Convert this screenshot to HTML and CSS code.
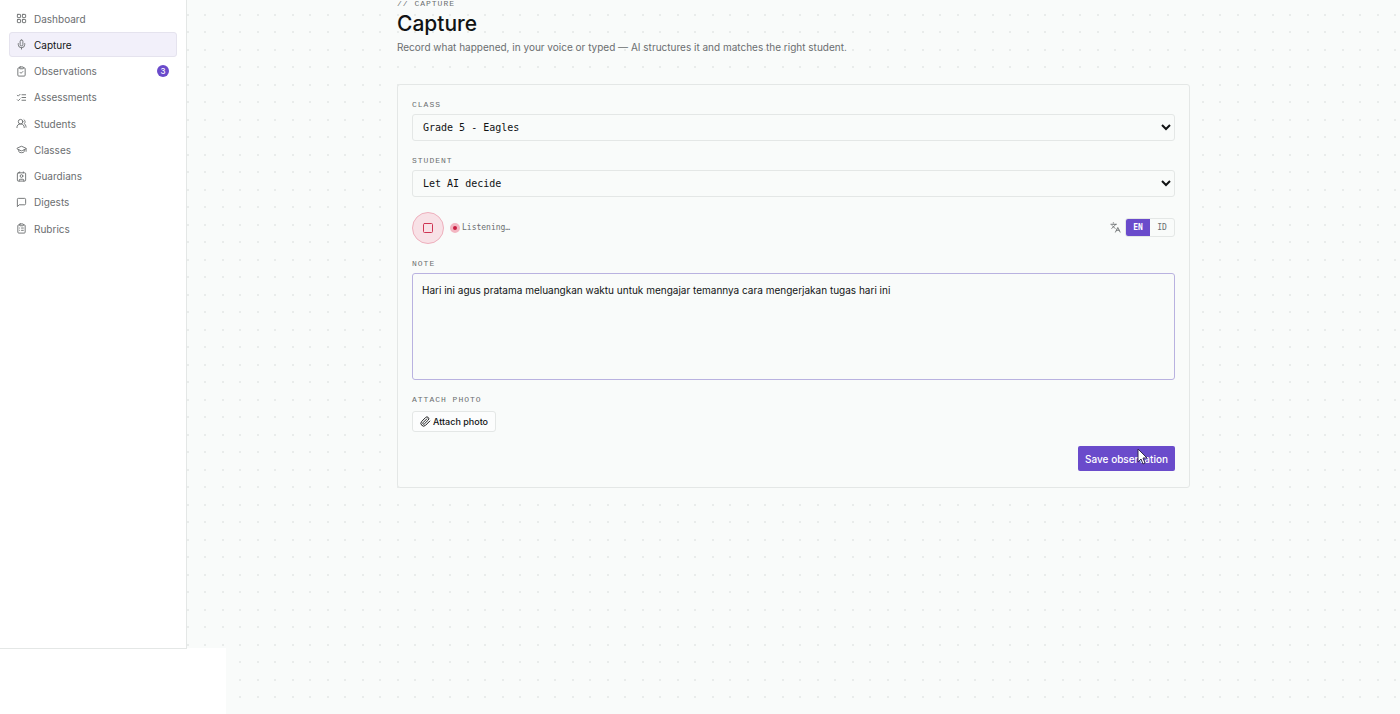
FILE: index.html
```html
<!DOCTYPE html>
<html lang="en">
<head>
    <meta charset="UTF-8">
    <meta name="viewport" content="width=device-width, initial-scale=1.0">
    <title>Capture</title>
    <link rel="stylesheet" href="styles.css">
</head>
<body>
    <div class="layout">
        <aside class="sidebar">
            <nav class="nav">
                <a href="#" class="nav-item">
                    <svg class="icon" viewBox="0 0 24 24"><rect x="3" y="3" width="7" height="7" rx="1"/><rect x="14" y="3" width="7" height="7" rx="1"/><rect x="14" y="14" width="7" height="7" rx="1"/><rect x="3" y="14" width="7" height="7" rx="1"/></svg>
                    Dashboard
                </a>
                <a href="#" class="nav-item active">
                    <svg class="icon" viewBox="0 0 24 24"><path d="M12 19v3"/><path d="M19 10v2a7 7 0 0 1-14 0v-2"/><rect x="9" y="2" width="6" height="13" rx="3"/></svg>
                    Capture
                </a>
                <a href="#" class="nav-item">
                    <svg class="icon" viewBox="0 0 24 24"><rect x="8" y="2" width="8" height="4" rx="1"/><path d="M16 4h2a2 2 0 0 1 2 2v14a2 2 0 0 1-2 2H6a2 2 0 0 1-2-2V6a2 2 0 0 1 2-2h2"/><path d="m9 14 2 2 4-4"/></svg>
                    Observations
                    <span class="badge">3</span>
                </a>
                <a href="#" class="nav-item">
                    <svg class="icon" viewBox="0 0 24 24"><path d="m3 17 2 2 4-4"/><path d="m3 7 2 2 4-4"/><path d="M13 6h8"/><path d="M13 12h8"/><path d="M13 18h8"/></svg>
                    Assessments
                </a>
                <a href="#" class="nav-item">
                    <svg class="icon" viewBox="0 0 24 24"><path d="M18 21a8 8 0 0 0-16 0"/><circle cx="10" cy="8" r="5"/><path d="M22 20c0-3.37-2-6.5-4-8a5 5 0 0 0-.45-8.3"/></svg>
                    Students
                </a>
                <a href="#" class="nav-item">
                    <svg class="icon" viewBox="0 0 24 24"><path d="M21.42 10.922a1 1 0 0 0-.019-1.838L12.83 5.18a2 2 0 0 0-1.66 0L2.6 9.08a1 1 0 0 0 0 1.832l8.57 3.908a2 2 0 0 0 1.66 0z"/><path d="M22 10v6"/><path d="M6 12.5V16a6 3 0 0 0 12 0v-3.5"/></svg>
                    Classes
                </a>
                <a href="#" class="nav-item">
                    <svg class="icon" viewBox="0 0 24 24"><path d="M16 2v2"/><path d="M8 2v2"/><path d="M7 22v-2a2 2 0 0 1 2-2h6a2 2 0 0 1 2 2v2"/><circle cx="12" cy="11" r="3"/><rect x="3" y="4" width="18" height="18" rx="2"/></svg>
                    Guardians
                </a>
                <a href="#" class="nav-item">
                    <svg class="icon" viewBox="0 0 24 24"><path d="M21 15a2 2 0 0 1-2 2H7l-4 4V5a2 2 0 0 1 2-2h14a2 2 0 0 1 2 2z"/></svg>
                    Digests
                </a>
                <a href="#" class="nav-item">
                    <svg class="icon" viewBox="0 0 24 24"><rect x="8" y="2" width="8" height="4" rx="1"/><path d="M16 4h2a2 2 0 0 1 2 2v14a2 2 0 0 1-2 2H6a2 2 0 0 1-2-2V6a2 2 0 0 1 2-2h2"/><path d="M12 11h4"/><path d="M12 16h4"/><path d="M8 11h.01"/><path d="M8 16h.01"/></svg>
                    Rubrics
                </a>
            </nav>
        </aside>

        <main class="main">
            <div class="container">
                <header class="page-header">
                    <p class="eyebrow">// CAPTURE</p>
                    <h1>Capture</h1>
                    <p class="subtitle">Record what happened, in your voice or typed — AI structures it and matches the right student.</p>
                </header>

                <form class="card">
                    <div class="field">
                        <label class="label" for="class">CLASS</label>
                        <select class="select" id="class">
                            <option>Grade 5 - Eagles</option>
                        </select>
                    </div>

                    <div class="field">
                        <label class="label" for="student">STUDENT</label>
                        <select class="select" id="student">
                            <option>Let AI decide</option>
                        </select>
                    </div>

                    <div class="recorder">
                        <button type="button" class="stop-button" aria-label="Stop recording">
                            <svg class="icon" viewBox="0 0 24 24"><rect x="3" y="3" width="18" height="18" rx="2"/></svg>
                        </button>
                        <span class="pulse"></span>
                        <span class="status">Listening…</span>
                        <div class="language">
                            <svg class="icon" viewBox="0 0 24 24"><path d="m5 8 6 6"/><path d="m4 14 6-6 2-3"/><path d="M2 5h12"/><path d="M7 2h1"/><path d="m22 22-5-10-5 10"/><path d="M14 18h6"/></svg>
                            <div class="toggle">
                                <button type="button" class="selected">EN</button>
                                <button type="button">ID</button>
                            </div>
                        </div>
                    </div>

                    <div class="field">
                        <label class="label" for="note">NOTE</label>
                        <textarea class="note" id="note" spellcheck="false">Hari ini agus pratama meluangkan waktu untuk mengajar temannya cara mengerjakan tugas hari ini</textarea>
                    </div>

                    <div class="field">
                        <span class="label">ATTACH PHOTO</span>
                        <button type="button" class="attach-button">
                            <svg class="icon" viewBox="0 0 24 24"><path d="m21.44 11.05-9.19 9.19a6 6 0 0 1-8.49-8.49l8.57-8.57A4 4 0 1 1 18 8.84l-8.59 8.57a2 2 0 0 1-2.83-2.83l8.49-8.48"/></svg>
                            Attach photo
                        </button>
                    </div>

                    <div class="actions">
                        <button type="submit" class="save-button">Save observation</button>
                        <svg class="cursor" viewBox="0 0 12 18"><path d="M1 1v13l3-3 2 5 2-1-2-5h4z"/></svg>
                    </div>
                </form>
            </div>
        </main>
    </div>
    <div class="status-panel"></div>
</body>
</html>
```
FILE: styles.css
```css
* {
    box-sizing: border-box;
}

body {
    margin: 0;
    font-family: Inter, "Liberation Sans", sans-serif;
    font-size: 10px;
    color: #111314;
    background: #f9fbfa;
}

h1, p {
    margin: 0;
}

button, select, textarea {
    font-family: inherit;
    margin: 0;
}

.icon {
    width: 11px;
    height: 11px;
    flex-shrink: 0;
    fill: none;
    stroke: currentColor;
    stroke-width: 2;
    stroke-linecap: round;
    stroke-linejoin: round;
}

.layout {
    display: flex;
    height: 100vh;
    overflow: hidden;
}

/* Sidebar */
.sidebar {
    width: 187px;
    flex-shrink: 0;
    padding: 6px 9px;
    background: #ffffff;
    border-right: 1px solid #e4e7e6;
}

.nav {
    display: flex;
    flex-direction: column;
    justify-content: space-between;
    height: 235px;
}

.nav-item {
    display: flex;
    align-items: center;
    gap: 7px;
    height: 25px;
    padding: 0 7px 0 6px;
    border: 1px solid transparent;
    border-radius: 3px;
    color: #6b6e70;
    text-decoration: none;
}

.nav-item.active {
    color: #111314;
    background: #f2f0fa;
    border-color: #e5e3ee;
}

.nav-item.active .icon {
    color: #6b6e70;
}

.badge {
    width: 12px;
    height: 12px;
    margin-left: auto;
    border-radius: 50%;
    background: #6a4bcb;
    color: #ffffff;
    font-size: 8px;
    font-weight: 500;
    line-height: 12px;
    text-align: center;
}

/* Main area, dots repeat twice per tile */
.main {
    flex: 1;
    background-image:
        radial-gradient(circle at 1px 1px, #e9eceb 1px, transparent 1px),
        radial-gradient(circle at 18px 1px, #e9eceb 1px, transparent 1px),
        radial-gradient(circle at 1px 18px, #e9eceb 1px, transparent 1px),
        radial-gradient(circle at 18px 18px, #e9eceb 1px, transparent 1px);
    background-size: 35px 35px;
    background-position: 0 14px;
}

.container {
    max-width: 793px;
    margin: 0 auto;
}

.page-header {
    margin-bottom: 28px;
}

.eyebrow,
.label {
    font-family: "Liberation Mono", monospace;
    font-size: 8px;
    letter-spacing: 1px;
    color: #6b6e70;
}

.eyebrow {
    margin-bottom: 1px;
    line-height: 7px;
}

h1 {
    font-size: 21px;
    font-weight: 500;
    line-height: 31px;
}

.subtitle {
    line-height: 17px;
    color: #6b6e70;
}

.card {
    display: flex;
    flex-direction: column;
    gap: 14px;
    padding: 14px 14px 16px;
    background: #f9fbfa;
    border: 1px solid #e4e7e6;
    border-radius: 3px;
}

.field {
    display: flex;
    flex-direction: column;
    align-items: flex-start;
    gap: 4px;
}

.label {
    line-height: 11px;
}

.select {
    width: 100%;
    height: 27px;
    padding: 0 0 0 6px;
    font-family: "DejaVu Sans Mono", monospace;
    font-size: 10px;
    color: #111314;
    background: #f9fbfa;
    border: 1px solid #e4e7e6;
    border-radius: 3px;
}

/* Recorder */
.recorder {
    display: flex;
    align-items: center;
    height: 33px;
}

.stop-button {
    display: flex;
    align-items: center;
    justify-content: center;
    width: 32px;
    height: 32px;
    padding: 0;
    color: #cf3352;
    background: #f8e1e6;
    border: 1px solid #eeb0bd;
    border-radius: 50%;
}

.stop-button .icon {
    width: 12px;
    height: 12px;
}

.pulse {
    width: 10px;
    height: 10px;
    margin: 0 2px 0 6px;
    border: 3px solid #f3b6c2;
    border-radius: 50%;
    background: #c81e41;
}

.status {
    font-family: "DejaVu Sans Mono", monospace;
    font-size: 8px;
    color: #6b6e70;
}

.language {
    display: flex;
    align-items: center;
    gap: 4px;
    margin-left: auto;
    color: #6b6e70;
}

.toggle {
    display: flex;
    border: 1px solid #e4e7e6;
    border-radius: 3px;
    overflow: hidden;
}

.toggle button {
    width: 24px;
    height: 17px;
    padding: 0;
    font-family: "DejaVu Sans Mono", monospace;
    font-size: 8px;
    color: #6b6e70;
    background: transparent;
    border: none;
}

.toggle .selected {
    color: #ffffff;
    background: #6a4bcb;
    font-weight: 700;
}

.note {
    display: block;
    width: 100%;
    height: 107px;
    padding: 8px 9px;
    font-size: 10px;
    line-height: 17px;
    color: #111314;
    background: #f9fbfa;
    border: 1px solid #b9b2e0;
    border-radius: 3px;
    resize: none;
}

.attach-button {
    display: flex;
    align-items: center;
    gap: 2px;
    height: 21px;
    margin-top: 2px;
    padding: 0 7px;
    font-size: 9px;
    font-weight: 500;
    color: #111314;
    background: #fcfdfd;
    border: 1px solid #e4e7e6;
    border-radius: 3px;
}

.actions {
    position: relative;
    display: flex;
    justify-content: flex-end;
}

.save-button {
    height: 25px;
    padding: 0 7px;
    font-size: 10px;
    font-weight: 500;
    color: #ffffff;
    background: #6a4bcb;
    border: none;
    border-radius: 2px;
}

.cursor {
    position: absolute;
    top: 2px;
    right: 26px;
    width: 12px;
    height: 18px;
    fill: #ffffff;
    stroke: #33264f;
    stroke-width: 1;
}

/* Panel over the bottom left corner */
.status-panel {
    position: fixed;
    left: 0;
    bottom: 0;
    width: 226px;
    height: 66px;
    background: #ffffff;
}

.status-panel::before {
    content: "";
    display: block;
    width: 187px;
    border-top: 1px solid #e4e7e6;
}
```
